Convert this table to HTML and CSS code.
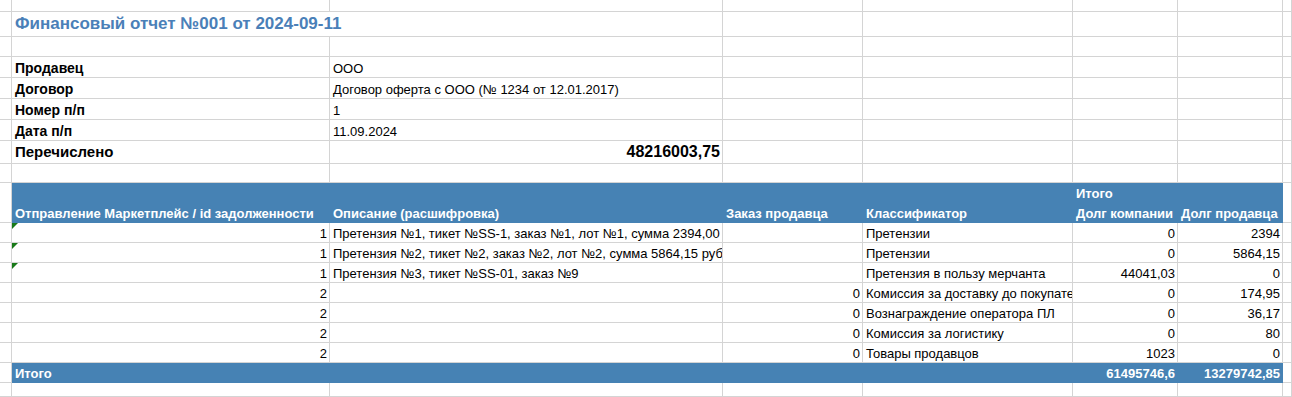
FILE: index.html
```html
<!DOCTYPE html>
<html lang="ru">
<head>
<meta charset="utf-8">
<title>Финансовый отчет №001</title>
<link rel="stylesheet" href="styles.css">
</head>
<body>
<div class="sheet">
  <!-- row 0 -->
  <div class="c"></div><div class="c"></div><div class="c"></div><div class="c"></div><div class="c"></div><div class="c"></div><div class="c"></div><div class="c"></div>
  <!-- row 1 title -->
  <div class="c"></div><div class="c title span2">Финансовый отчет №001 от 2024-09-11</div><div class="c"></div><div class="c"></div><div class="c"></div><div class="c"></div><div class="c"></div>
  <!-- row 2 -->
  <div class="c"></div><div class="c"></div><div class="c"></div><div class="c"></div><div class="c"></div><div class="c"></div><div class="c"></div><div class="c"></div>
  <!-- row 3 -->
  <div class="c"></div><div class="c b lbl">Продавец</div><div class="c">ООО</div><div class="c"></div><div class="c"></div><div class="c"></div><div class="c"></div><div class="c"></div>
  <!-- row 4 -->
  <div class="c"></div><div class="c b lbl">Договор</div><div class="c">Договор оферта с ООО (№ 1234 от 12.01.2017)</div><div class="c"></div><div class="c"></div><div class="c"></div><div class="c"></div><div class="c"></div>
  <!-- row 5 -->
  <div class="c"></div><div class="c b lbl">Номер п/п</div><div class="c">1</div><div class="c"></div><div class="c"></div><div class="c"></div><div class="c"></div><div class="c"></div>
  <!-- row 6 -->
  <div class="c"></div><div class="c b lbl">Дата п/п</div><div class="c">11.09.2024</div><div class="c"></div><div class="c"></div><div class="c"></div><div class="c"></div><div class="c"></div>
  <!-- row 7 -->
  <div class="c"></div><div class="c b big">Перечислено</div><div class="c b big num r">48216003,75</div><div class="c"></div><div class="c"></div><div class="c"></div><div class="c"></div><div class="c"></div>
  <!-- row 8 -->
  <div class="c"></div><div class="c"></div><div class="c"></div><div class="c"></div><div class="c"></div><div class="c"></div><div class="c"></div><div class="c"></div>
  <!-- row 9 header -->
  <div class="c"></div>
  <div class="c blue">Отправление Маркетплейс / id задолженности</div>
  <div class="c blue">Описание (расшифровка)</div>
  <div class="c blue">Заказ продавца</div>
  <div class="c blue">Классификатор</div>
  <div class="c blue two"><span>Итого</span><span>Долг компании</span></div>
  <div class="c blue">Долг продавца</div>
  <div class="c"></div>
  <!-- data rows -->
  <div class="c"></div><div class="c r tri">1</div><div class="c">Претензия №1, тикет №SS-1, заказ №1, лот №1, сумма 2394,00 руб.</div><div class="c"></div><div class="c">Претензии</div><div class="c r">0</div><div class="c r">2394</div><div class="c"></div>
  <div class="c"></div><div class="c r tri">1</div><div class="c">Претензия №2, тикет №2, заказ №2, лот №2, сумма 5864,15 руб.</div><div class="c"></div><div class="c">Претензии</div><div class="c r">0</div><div class="c r">5864,15</div><div class="c"></div>
  <div class="c"></div><div class="c r tri">1</div><div class="c">Претензия №3, тикет №SS-01, заказ №9</div><div class="c"></div><div class="c">Претензия в пользу мерчанта</div><div class="c r">44041,03</div><div class="c r">0</div><div class="c"></div>
  <div class="c"></div><div class="c r">2</div><div class="c"></div><div class="c r">0</div><div class="c">Комиссия за доставку до покупателя</div><div class="c r">0</div><div class="c r">174,95</div><div class="c"></div>
  <div class="c"></div><div class="c r">2</div><div class="c"></div><div class="c r">0</div><div class="c">Вознаграждение оператора ПЛ</div><div class="c r">0</div><div class="c r">36,17</div><div class="c"></div>
  <div class="c"></div><div class="c r">2</div><div class="c"></div><div class="c r">0</div><div class="c">Комиссия за логистику</div><div class="c r">0</div><div class="c r">80</div><div class="c"></div>
  <div class="c"></div><div class="c r">2</div><div class="c"></div><div class="c r">0</div><div class="c">Товары продавцов</div><div class="c r">1023</div><div class="c r">0</div><div class="c"></div>
  <!-- total -->
  <div class="c"></div><div class="c blue">Итого</div><div class="c blue"></div><div class="c blue"></div><div class="c blue"></div><div class="c blue r">61495746,6</div><div class="c blue r">13279742,85</div><div class="c"></div>
  <!-- last -->
  <div class="c"></div><div class="c"></div><div class="c"></div><div class="c"></div><div class="c"></div><div class="c"></div><div class="c"></div><div class="c"></div>
</div>
</body>
</html>
```
FILE: styles.css
```css
html, body {
  margin: 0;
  padding: 0;
  background: #ffffff;
}
body {
  width: 1292px;
  height: 397px;
  overflow: hidden;
  font-family: "Liberation Sans", Arial, sans-serif;
  font-size: 13px;
  color: #000000;
}
.sheet {
  display: grid;
  grid-template-columns: 12px 318px 393px 140px 210px 105px 105px 1fr;
  grid-template-rows: 12px 25px 20px 21px 21px 21px 21px 23px 19px 40px 20px 20px 20px 20px 20px 20px 20px 20px 1fr;
  height: 397px;
}
.c {
  box-sizing: border-box;
  border-right: 1px solid #d4d4d4;
  border-bottom: 1px solid #d4d4d4;
  padding: 0 2px 1px 3px;
  display: flex;
  align-items: flex-end;
  line-height: 15px;
  white-space: nowrap;
  overflow: hidden;
  min-width: 0;
  position: relative;
}
.r {
  justify-content: flex-end;
}
.b {
  font-weight: bold;
}
.lbl {
  font-size: 14px;
}
.big {
  font-size: 15px;
  line-height: 18px;
  padding-bottom: 2px;
}
.num {
  font-size: 16px;
}
.span2 {
  grid-column: span 2;
}
.title {
  color: #4a80b8;
  font-weight: bold;
  font-size: 17px;
  line-height: 20px;
  padding-bottom: 2px;
}
.blue {
  background: #4682b4;
  border-color: #4682b4;
  color: #ffffff;
  font-weight: bold;
}
.two {
  flex-direction: column;
  align-items: flex-start;
  justify-content: flex-end;
}
.two span {
  display: block;
  line-height: 15px;
}
.two span:first-child {
  margin-bottom: 5px;
}
.tri::before {
  content: "";
  position: absolute;
  top: 0;
  left: 0;
  width: 0;
  height: 0;
  border-top: 6px solid #1a7a1a;
  border-right: 6px solid transparent;
}
```
